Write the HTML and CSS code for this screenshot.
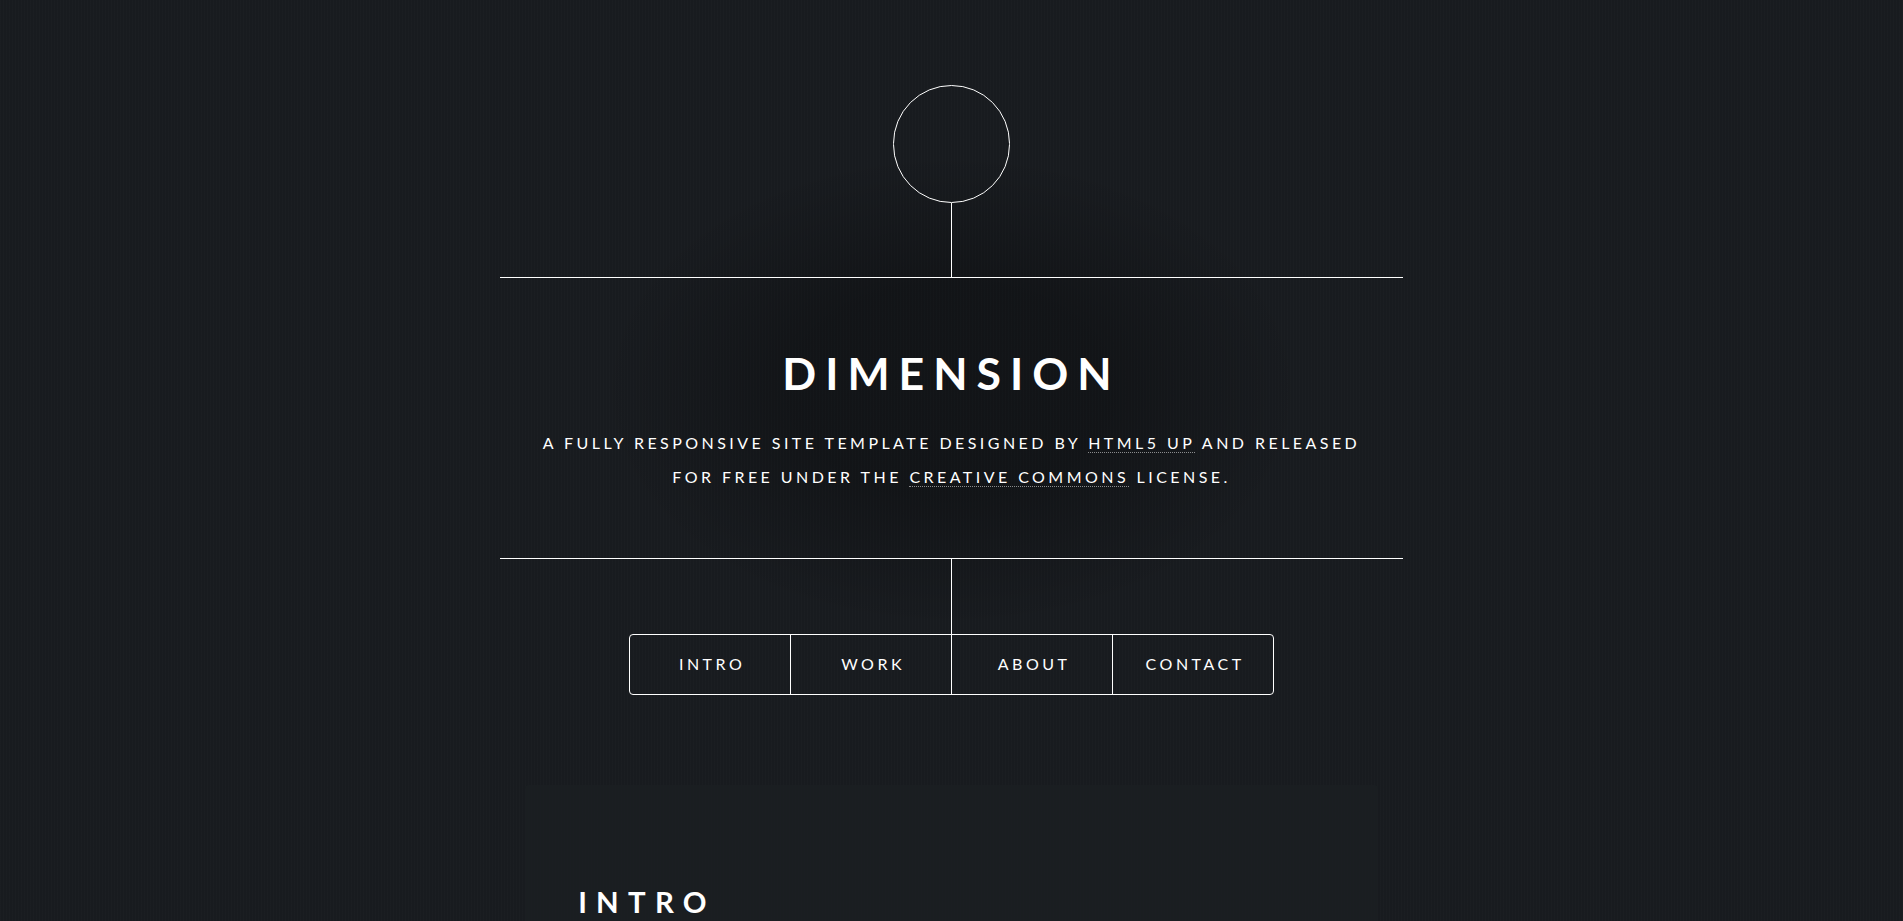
FILE: index.html
```html
<!DOCTYPE html>
<html lang="en">
<head>
<meta charset="utf-8">
<title>Dimension by HTML5 UP</title>
<link rel="stylesheet" href="styles.css">
</head>
<body>
<div class="wrapper">
  <header class="header">
    <div class="logo"></div>
    <div class="stem"></div>
    <div class="content">
      <div class="inner">
        <h1 class="title">Dimension</h1>
        <p class="tagline">A fully responsive site template designed by <a href="#">HTML5 UP</a> and released<br>for free under the <a href="#">Creative Commons</a> license.</p>
      </div>
    </div>
    <div class="stem"></div>
    <nav class="nav">
      <ul class="nav-list">
        <li class="nav-item"><a class="nav-link" href="#intro">Intro</a></li>
        <li class="nav-item"><a class="nav-link" href="#work">Work</a></li>
        <li class="nav-item"><a class="nav-link" href="#about">About</a></li>
        <li class="nav-item"><a class="nav-link" href="#contact">Contact</a></li>
      </ul>
    </nav>
  </header>
  <main class="main">
    <article class="article" id="intro">
      <h2 class="major">Intro</h2>
      <div class="image-main"></div>
      <p class="text">Aenean ornare velit lacus, ac varius enim ullamcorper eu. Proin aliquam facilisis ante interdum congue. Integer mollis, nisl amet convallis, porttitor magna ullamcorper, amet egestas mauris. Ut magna finibus nisi nec lacinia. Nam maximus erat id euismod egestas.</p>
      <p class="text">Nullam et orci eu lorem consequat tincidunt vivamus et sagittis magna sed nunc rhoncus condimentum sem. In efficitur ligula tate urna. Maecenas massa vel lacinia pellentesque lorem ipsum dolor.</p>
    </article>
  </main>
</div>
</body>
</html>
```
FILE: styles.css
```css
html { font-size: 21.333px; }
*, *::before, *::after { box-sizing: border-box; }
body {
  margin: 0;
  min-height: 100vh;
  background-color: #181b1f;
  background-image: repeating-linear-gradient(90deg, rgba(255,255,255,0.012) 0 1px, rgba(0,0,0,0) 1px 3px);
  color: #fff;
  font-family: "Lato", "Noto Sans", sans-serif;
  font-weight: 400;
  font-size: 1rem;
  line-height: 1.65;
}
.wrapper {
  display: flex;
  flex-direction: column;
  align-items: center;
  padding: 4rem 2rem;
}
.header {
  display: flex;
  flex-direction: column;
  align-items: center;
  text-align: center;
  max-width: 100%;
  background-image: radial-gradient(rgba(0,0,0,0.25) 25%, rgba(0,0,0,0) 55%);
}
.logo {
  width: 5.5rem;
  height: 5.5rem;
  border: 1px solid #fff;
  border-radius: 100%;
}
.stem {
  width: 1px;
  height: 3.5rem;
  background: #fff;
}
.content {
  border-top: 1px solid #fff;
  border-bottom: 1px solid #fff;
  max-width: 100%;
}
.inner {
  padding: 64px 42.667px;
}
.title {
  margin: 0 0 21.333px 0;
  font-size: 44.6px;
  font-weight: 700;
  line-height: 62.4px;
  letter-spacing: 9px;
  text-transform: uppercase;
}
.tagline {
  margin: 0;
  font-size: 16px;
  line-height: 34.133px;
  letter-spacing: 3.45px;
  text-transform: uppercase;
}
.tagline a {
  color: inherit;
  text-decoration: none;
  border-bottom: 1px dotted rgba(255,255,255,0.5);
}
.nav-list {
  display: flex;
  margin: 0;
  padding: 0;
  list-style: none;
  border: 1px solid #fff;
  border-radius: 4px;
}
.nav-item + .nav-item {
  border-left: 1px solid #fff;
}
.nav-link {
  display: block;
  min-width: 160px;
  height: 58.667px;
  line-height: 58.667px;
  padding: 0 26.667px 0 30.933px;
  font-size: 16px;
  letter-spacing: 3.5px;
  text-transform: uppercase;
  color: #fff;
  text-decoration: none;
}
.main {
  margin-top: 90px;
  display: flex;
  flex-direction: column;
  align-items: center;
}
.article {
  width: 853.333px;
  max-width: 100%;
  padding: 93.5px 53.333px 32px 53.333px;
  background-color: rgba(27,31,34,0.85);
  border-radius: 4px;
}
.major {
  width: max-content;
  margin: 0 0 42.667px 0;
  padding-bottom: 10.667px;
  border-bottom: 1px solid #fff;
  font-size: 29.4px;
  font-weight: 700;
  line-height: 48px;
  letter-spacing: 9.25px;
  text-transform: uppercase;
}
.image-main {
  height: 384px;
  margin-bottom: 42.667px;
  border-radius: 4px;
  background: #2a2f35;
}
.text {
  margin: 0 0 42.667px 0;
}
```
